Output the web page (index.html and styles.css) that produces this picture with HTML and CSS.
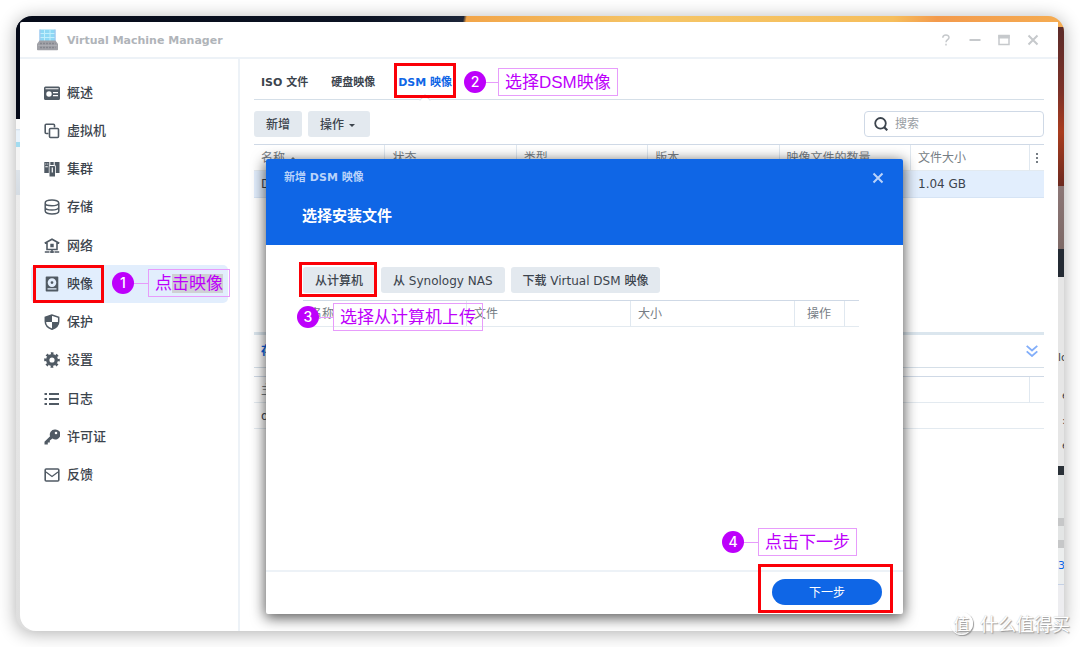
FILE: index.html
```html
<!DOCTYPE html>
<html lang="zh-CN">
<head>
<meta charset="utf-8">
<title>Virtual Machine Manager</title>
<link rel="stylesheet" href="styles.css">
</head>
<body>
<div class="desktop">
  <div class="strip-left"></div>
  <div class="window">
    <header class="titlebar">
      <svg class="app-icon" viewBox="0 0 22 22" aria-hidden="true">
        <rect x="2.500" y="0.500" width="16" height="12" fill="#8ed8f4"/>
        <path d="M2.500 4.500h16M2.500 8.500h16M7.500 .5v12M13 .5v12" stroke="#c2effc" stroke-width="1"/>
        <path d="M3 .5v12M18 .5v12" stroke="#a5c3ee" stroke-width="1"/>
        <path d="M2.500 11.500h16l2.500 3.500v5.500q0 .8-.8.8H.8q-.8 0-.8-.8V15z" fill="#a0a1a7"/>
        <path d="M3 14.500h15.500M3 18.500h15.500" stroke="#85878f" stroke-width="1.400" stroke-dasharray="2 1"/>
        <path d="M1 16.500h19" stroke="#b0b1b7" stroke-width=".8"/>
      </svg>
      <h1 class="app-title">Virtual Machine Manager</h1>
      <div class="window-controls">
        <button class="win-btn" aria-label="帮助"><svg viewBox="0 0 12 12"><path d="M2.800 3.700C2.800.2 9 .2 9 3.500 9 5.700 6 5.700 6 8.300M6 9.800v1.700" fill="none" stroke="currentColor" stroke-width="1.500"/></svg></button>
        <button class="win-btn" aria-label="最小化"><svg viewBox="0 0 12 12"><path d="M.5 6h11" stroke="currentColor" stroke-width="1.800"/></svg></button>
        <button class="win-btn" aria-label="最大化"><svg viewBox="0 0 12 12"><path d="M1 1.500h10v9H1z" fill="none" stroke="currentColor" stroke-width="1.500"/><path d="M.3 1h11.400v3.500H.3z" fill="currentColor"/></svg></button>
        <button class="win-btn" aria-label="关闭"><svg viewBox="0 0 12 12"><path d="M1.500 1.500l9 9M10.500 1.500l-9 9" stroke="currentColor" stroke-width="2"/></svg></button>
      </div>
    </header>
    <div class="workspace">
      <nav class="sidebar">
        <a class="nav-item" href="#overview"><svg viewBox="0 0 16 16"><path fill-rule="evenodd" fill="currentColor" d="M1.500 1.500h13Q16 1.500 16 3v10.500q0 1.500-1.500 1.500h-13Q0 15 0 13.500V3q0-1.500 1.500-1.500zM1.500 3.200v1h13v-1zM5 6.300a2.700 2.700 0 1 0 0 5.400 2.700 2.700 0 0 0 0-5.400zM9 7v1.300h5V7zM9 10v1.300h5V10z"/></svg>概述</a>
        <a class="nav-item" href="#vm"><svg viewBox="0 0 16 16"><g fill="none" stroke="currentColor" stroke-width="1.600"><path d="M4.500 10.500H2.200q-1 0-1-1V2.200q0-1 1-1h7.300q1 0 1 1v2.300"/><rect x="5.500" y="5.500" width="9" height="9" rx="1"/></g></svg>虚拟机</a>
        <a class="nav-item" href="#cluster"><svg viewBox="0 0 16 16"><path fill="currentColor" fill-rule="evenodd" d="M.3 1h5v3.500h-.5V12H.3zM1.300 2.500v1h1v-1zm2 0v1h1v-1zM1.300 5.300v.9h2.500v-.9zM10.700 1h4.800v11h-3.700V4.500h-1.100zM6.200 5h4q.8 0 .8.800v9.700H5.500V5.800Q5.500 5 6.200 5zM7.700 6.500v5h1.200v-5zM6.300 1h3.400v3H6.300z"/></svg>集群</a>
        <a class="nav-item" href="#storage"><svg viewBox="0 0 16 16"><g fill="none" stroke="currentColor" stroke-width="1.500"><path d="M1.200 4c0-4 13.600-4 13.600 0v8c0 4-13.600 4-13.600 0zM1.200 4.300c0 3.300 13.600 3.300 13.600 0M1.200 8.300c0 3.700 13.600 3.700 13.600 0"/></g></svg>存储</a>
        <a class="nav-item" href="#network"><svg viewBox="0 0 16 16"><g fill="none" stroke="currentColor" stroke-width="1.600"><path d="M.7 5.300L8 1.200l7.300 4.100M3 4.500v7h10v-7M8 11.500V15M.8 14h4.700M10.500 14h4.700M6 14h4"/></g><path d="M6.300 5.800h3.400v3.400H6.300z" fill="currentColor"/></svg>网络</a>
        <a class="nav-item active" href="#image" aria-current="page"><svg viewBox="0 0 16 16"><path fill="currentColor" fill-rule="evenodd" d="M2.500 .5h11q.8 0 .8.800v13.400q0 .8-.8.8h-11q-.8 0-.8-.8V1.300q0-.8.800-.8zM8 2.300a4.300 4.300 0 1 0 0 8.600 4.300 4.300 0 0 0 0-8.600zM8 5.200a1.400 1.400 0 1 1 0 2.800 1.400 1.400 0 0 1 0-2.800zM3.500 12.300v1.200h9v-1.200z"/></svg>映像<span class="mark mark-nav"></span></a>
        <a class="nav-item" href="#protection"><svg viewBox="0 0 16 16"><path d="M8 1L1.300 3.300V7.500C1.300 11 4 13.800 8 15.200c4-1.400 6.700-4.200 6.700-7.700V3.300z" fill="#fff" stroke="currentColor" stroke-width="1.500"/><path d="M8 1v7H1.500C1.200 6 1.300 3.300 1.300 3.300zM8 8h6.700c-.4 3.700-3.200 6-6.700 7.200z" fill="currentColor"/></svg>保护</a>
        <a class="nav-item" href="#settings"><svg viewBox="0 0 16 16"><circle cx="8" cy="8" r="4.300" fill="none" stroke="currentColor" stroke-width="3.400"/><circle cx="8" cy="8" r="6.600" fill="none" stroke="currentColor" stroke-width="2.400" stroke-dasharray="2.600 2.580" stroke-dashoffset="1.300"/></svg>设置</a>
        <a class="nav-item" href="#log"><svg viewBox="0 0 16 16"><path d="M.5 3h2.500M.5 8h2.500M.5 13h2.500M5 3h10M5 8h10M5 13h10" stroke="currentColor" stroke-width="1.800"/></svg>日志</a>
        <a class="nav-item" href="#license"><svg viewBox="0 0 16 16"><path fill="currentColor" fill-rule="evenodd" d="M10.700.5a5 5 0 0 0-4.600 6.700L.5 12.700V15.500h3.300v-2h2v-2l2.700-2a5 5 0 1 0 2.200-9zM12 2.700a1.300 1.300 0 1 1 0 2.600 1.300 1.300 0 0 1 0-2.600z"/></svg>许可证</a>
        <a class="nav-item" href="#feedback"><svg viewBox="0 0 16 16"><g fill="none" stroke="currentColor" stroke-width="1.600"><rect x="1.200" y="2" width="13.600" height="12" rx="1"/><path stroke-width="1.200" d="M2 5l6 4.500L14 5"/></g></svg>反馈</a>
        <div class="note note-1"><b>1</b><i></i><span>点<mark>击映像</mark></span></div>
      </nav>
      <main class="main">
        <div class="tabs" role="tablist">
          <button class="tab" role="tab">ISO 文件</button>
          <button class="tab" role="tab">硬盘映像</button>
          <button class="tab selected" role="tab" aria-selected="true">DSM 映像<span class="notch"></span><span class="mark mark-tab"></span></button>
          <div class="note note-2"><b>2</b><i></i><span>选择DSM映像</span></div>
        </div>
        <div class="toolbar">
          <button class="btn">新增</button>
          <button class="btn">操作<span class="caret"></span></button>
          <label class="search">
            <svg viewBox="0 0 14 14" aria-hidden="true"><circle cx="6.500" cy="6.300" r="5.300" fill="none" stroke="currentColor" stroke-width="1.800"/><path d="M10 10l3.300 3.300" stroke="currentColor" stroke-width="2.200"/></svg>
            <input type="text" placeholder="搜索" aria-label="搜索">
          </label>
        </div>
        <table class="grid images">
          <colgroup><col><col><col><col><col><col class="c-size"><col class="c-more"></colgroup>
          <thead><tr><th>名称<span class="sort"></span></th><th>状态</th><th>类型</th><th>版本</th><th>映像文件的数量</th><th>文件大小</th><th class="more"><svg viewBox="0 0 4 12" aria-hidden="true"><path d="M1 1h2v2H1zM1 5h2v2H1zM1 9h2v2H1z" fill="currentColor"/></svg></th></tr></thead>
          <tbody><tr><td>DSM</td><td></td><td></td><td></td><td></td><td colspan="2">1.04 GB</td></tr></tbody>
        </table>
        <section class="detail">
          <h2 class="detail-head">存储<button class="fold" aria-label="收起"><svg viewBox="0 0 12 12"><path d="M.7 .8L6 5.500 11.300.8M.7 6.300L6 11l5.300-4.700" fill="none" stroke="currentColor" stroke-width="1.800"/></svg></button></h2>
          <table class="grid hosts">
            <colgroup><col><col class="c-more"></colgroup>
            <thead><tr><th>主机</th><th></th></tr></thead>
            <tbody><tr><td colspan="2">ds</td></tr></tbody>
          </table>
        </section>
      </main>
    </div>
    <div class="dialog" role="dialog" aria-labelledby="dialog-title">
      <header class="dialog-head">
        <div class="dialog-bar"><span id="dialog-title">新增 DSM 映像</span>
          <button class="dialog-close" aria-label="关闭"><svg viewBox="0 0 12 12"><path d="M1.500 1.500l9 9M10.500 1.500l-9 9" stroke="currentColor" stroke-width="2"/></svg></button>
        </div>
        <h2>选择安装文件</h2>
      </header>
      <div class="dialog-body">
        <div class="sources">
          <button class="btn">从计算机<span class="mark mark-source"></span></button>
          <button class="btn">从 Synology NAS</button>
          <button class="btn">下载 Virtual DSM 映像</button>
        </div>
        <table class="grid files">
          <colgroup><col><col><col><col class="c-action"><col class="c-more"></colgroup>
          <thead><tr><th>名称</th><th>文件</th><th>大小</th><th class="action">操作</th><th></th></tr></thead>
        </table>
        <div class="note note-3"><b>3</b><i></i><span>选择从计算机上传</span></div>
      </div>
      <footer class="dialog-foot">
        <button class="primary">下一步<span class="mark mark-next"></span></button>
        <div class="note note-4"><b>4</b><i></i><span>点击下一步</span></div>
      </footer>
    </div>
  </div>
  <div class="strip-right"><span>lo</span><span class="indent">e</span><span class="indent">:</span><span class="indent">e</span><span class="blue">3/</span></div>
</div>
<div class="watermark"><b>值</b>什么值得买</div>
</body>
</html>
```

FILE: styles.css
```css
* { box-sizing: border-box; }

body {
  margin: 0;
  min-height: 100vh;
  padding: 16px;
  display: flex;
  background: #fff;
  color: #3c444d;
  font: 12px/18px "DejaVu Sans", "Noto Sans CJK SC", sans-serif;
  overflow: hidden;
}

button, input { font: inherit; color: inherit; border: 0; background: none; padding: 0; margin: 0; }
a { color: inherit; text-decoration: none; }
h1, h2 { margin: 0; font: inherit; }
svg { display: block; flex: none; }

.desktop {
  flex: 1;
  display: grid;
  grid-template-columns: 4px 1fr 6px;
  padding-top: 6px;
  border-radius: 16px;
  overflow: hidden;
  background: linear-gradient(100deg, #050a18 0, #0b1222 36%, #1c2538 45%, #f2a549 45.300%, #f5c566 62%, #f6be5c 84%, #f39a4c 88%, #f5ad52 100%) -48px 0 / calc(100% + 48px) 32px no-repeat #dedede;
  box-shadow: 0 2px 18px rgba(0, 0, 0, .32);
}

.strip-left {
  background: linear-gradient(#050a18 97px, #fafafa 97px, #fafafa 107px, #cfdcea 107px, #eaf3fb 109px, #eaf3fb 120px, #a3dcf0 120px, #a3dcf0 125px, #f4f4f4 125px, #f4f4f4 148px, #dde3e9 148px, #d5dce3 173px, #ececec 173px, #dedede 100%);
}

.strip-right {
  overflow: hidden;
  display: flex;
  flex-direction: column;
  padding-top: 327px;
  font-size: 11px;
  background: linear-gradient(transparent 5px, #5c2b2a 5px, #7c3128 70px, #a93c1e 110px, #6d2a20 164px, #8c7777 164px, #7d6966 227px, #242b34 227px, #242b34 255px, #e6e6e6 255px, #e6e6e6 444px, #2a3138 444px, #2a3138 453px, #e3e5e5 453px, #e3e5e5 496px, #c6c7c8 496px, #c6c7c8 504px, #e3e5e5 504px, #e3e5e5 518px, #c6c7c8 518px, #c6c7c8 526px, #eceeee 526px, #eceeee 562px, #c5d1e5 562px, #c5d1e5 563px, #ededf0 563px);
}
.strip-right span { height: 18px; }
.strip-right .indent { margin-top: 20px; padding-left: 4px; }
.strip-right .indent + .indent { margin-top: 7px; }
.strip-right .blue { margin-top: 102px; color: #0f66e6; }

.window {
  position: relative;
  display: flex;
  flex-direction: column;
  min-width: 0;
  background: #fff;
  border-radius: 2px 0 0 16px;
}

.titlebar {
  display: flex;
  align-items: center;
  height: 37px;
  padding: 0 19px 0 17px;
  border-bottom: 2px solid #edf2f7;
  color: #b0b4b9;
}
.app-icon { width: 22px; height: 22px; margin-right: 8px; }
.app-title { padding-top: 2px; font-size: 11px; font-weight: bold; }
.window-controls { display: flex; gap: 17px; margin-left: auto; }
.win-btn { color: #c6c9cc; }
.win-btn svg { width: 12px; height: 12px; }

.workspace { flex: 1; display: flex; min-height: 0; }

.sidebar {
  position: relative;
  flex: none;
  width: 220px;
  padding: 15px 10px 0 11px;
  border-right: 2px solid #edf2f7;
}
.nav-item {
  position: relative;
  display: flex;
  align-items: center;
  gap: 7px;
  height: 38px;
  padding-left: 13px;
  border-radius: 5px;
  font-size: 13px;
  font-weight: 500;
}
.nav-item:nth-of-type(4n) { margin-bottom: 1px; }
.nav-item svg { width: 16px; height: 16px; color: #505a64; }
.nav-item.active { background: #e2eefd; }

.main { flex: 1; min-width: 0; padding: 0 14px; display: flex; flex-direction: column; }

.tabs {
  position: relative;
  display: flex;
  gap: 23px;
  height: 41px;
  padding: 8px 7px 0;
  border-bottom: 1px solid #d5dfe8;
}
.tab { position: relative; font-size: 11px; font-weight: bold; white-space: nowrap; }
.tab.selected { color: #0f66e6; }
.notch {
  position: absolute;
  left: calc(50% - 4px);
  bottom: -5px;
  width: 8px;
  height: 8px;
  transform: rotate(45deg);
  border: 1px solid #d5dfe8;
  border-width: 1px 0 0 1px;
  background: #fff;
}

.toolbar { display: flex; gap: 6px; padding: 11px 0 7px; }
.btn {
  position: relative;
  display: flex;
  align-items: center;
  height: 26px;
  padding: 1px 12px 0;
  border-radius: 3px;
  background: #e3e9ef;
  font-weight: 500;
  white-space: nowrap;
}
.caret { margin: 1px 3px 0 5px; border: 3px solid transparent; border-top-color: currentColor; border-bottom: 0; }
.search {
  display: flex;
  align-items: center;
  gap: 7px;
  width: 180px;
  height: 26px;
  margin-left: auto;
  padding: 0 9px;
  border: 1px solid #cfd9e6;
  border-radius: 4px;
}
.search svg { width: 14px; height: 14px; }
.search input { flex: 1; min-width: 0; outline: 0; }
.search input::placeholder { color: #989da3; opacity: 1; }

.grid { width: 100%; table-layout: fixed; border-collapse: separate; border-spacing: 0; border-top: 1px solid #cfd9e6; }
.grid th, .grid td { height: 26px; padding: 0 7px; text-align: left; font-weight: normal; white-space: nowrap; border-bottom: 1px solid #e3eaf0; }
.grid th { color: #767d84; border-right: 1px solid #e0e8f0; }
.grid th:last-child { border-right: 0; }
.grid .more { padding: 0 5px; }
.more svg { width: 4px; height: 12px; }
.c-size { width: 119px; }
.c-more { width: 14px; }
.c-action { width: 50px; }
.images td { background: #e2eefd; height: 27px; border-color: #d6e4f5; }
.sort { display: inline-block; margin: 0 0 2px 5px; border: 3px solid transparent; border-bottom-color: currentColor; border-top: 0; }

.detail { margin-top: 134px; border-top: 3px solid #dbe6ee; }
.detail-head {
  display: flex;
  align-items: center;
  justify-content: space-between;
  height: 33px;
  margin-bottom: 8px;
  padding: 0 6px 0 7px;
  border-bottom: 1px solid #d5dfe8;
  color: #0f66e6;
  font-weight: bold;
}
.fold { color: #82aefa; }
.fold svg { width: 12px; height: 12px; }

.dialog {
  position: absolute;
  top: 137px;
  right: 155px;
  bottom: 17px;
  left: 246px;
  display: flex;
  flex-direction: column;
  background: #fff;
  border-radius: 2px;
  box-shadow: 0 3px 14px 1px rgba(0, 0, 0, .65);
}
.dialog-head { height: 86px; padding: 10px 18px 0; background: #0f66e6; color: #fff; border-radius: 2px 2px 0 0; }
.dialog-bar { display: flex; justify-content: space-between; align-items: center; font-size: 11px; font-weight: bold; color: #b9d3fa; }
.dialog-close { margin-right: 1px; }
.dialog-close svg { width: 12px; height: 12px; }
.dialog-head h2 { margin: 20px 0 0 18px; font-size: 15px; font-weight: bold; }
.dialog-body { position: relative; flex: 1; padding: 22px 44px 0 37px; }
.sources { display: flex; gap: 6px; margin-bottom: 7px; }
.files .action { padding: 0 12px; }
.dialog-foot { position: relative; display: flex; justify-content: flex-end; padding: 7px 21px 9px; border-top: 2px solid #edf2f7; }
.primary { position: relative; width: 110px; height: 26px; padding-top: 1px; border-radius: 13px; background: #0f66e6; color: #fff; }

/* Red frames around the control of each step */
.mark { position: absolute; border: 3px solid #fb0007; pointer-events: none; }
.mark-nav { inset: 0 auto 0 2px; width: 71px; }
.mark-tab { inset: -4px -4px 1px; }
.mark-source { inset: -5px -2px -4px -4px; }
.mark-next { inset: -15px -11px -8px -14px; }

/* Numbered step captions */
.note {
  position: absolute;
  display: flex;
  align-items: center;
  color: #bd00fb;
  font: 17px/24px "Liberation Sans", "Noto Sans CJK SC", sans-serif;
  white-space: nowrap;
}
.note b { width: 22px; height: 22px; border-radius: 50%; background: #bd00fb; color: #fff; font: 500 14px/22px Inter, sans-serif; text-align: center; }
.note i { width: 14px; height: 1px; background: #e79cfb; }
.note span { padding: 2px 6px 0; border: 1px solid #e79cfb; }
.note mark { color: inherit; background: #cfd0d4; }
.note-1 { left: 92px; top: 210px; }
.note-2 { left: 210px; top: 9px; }
.note-2 i { width: 12px; }
.note-3 { left: 31px; top: 58px; }
.note-4 { right: 46px; bottom: 58px; }

.watermark {
  position: absolute;
  right: 10px;
  bottom: 11px;
  display: flex;
  align-items: center;
  gap: 7px;
  color: #fff;
  font: 18px/26px "Noto Sans CJK SC", sans-serif;
  text-shadow: 1px 1px 1px #999, 0 0 1px #bbb;
}
.watermark b { width: 23px; height: 23px; border: 1px solid #fff; border-radius: 50%; font: 16px/21px "Noto Sans CJK SC", sans-serif; text-align: center; box-shadow: 1px 1px 1px #999; }
```
